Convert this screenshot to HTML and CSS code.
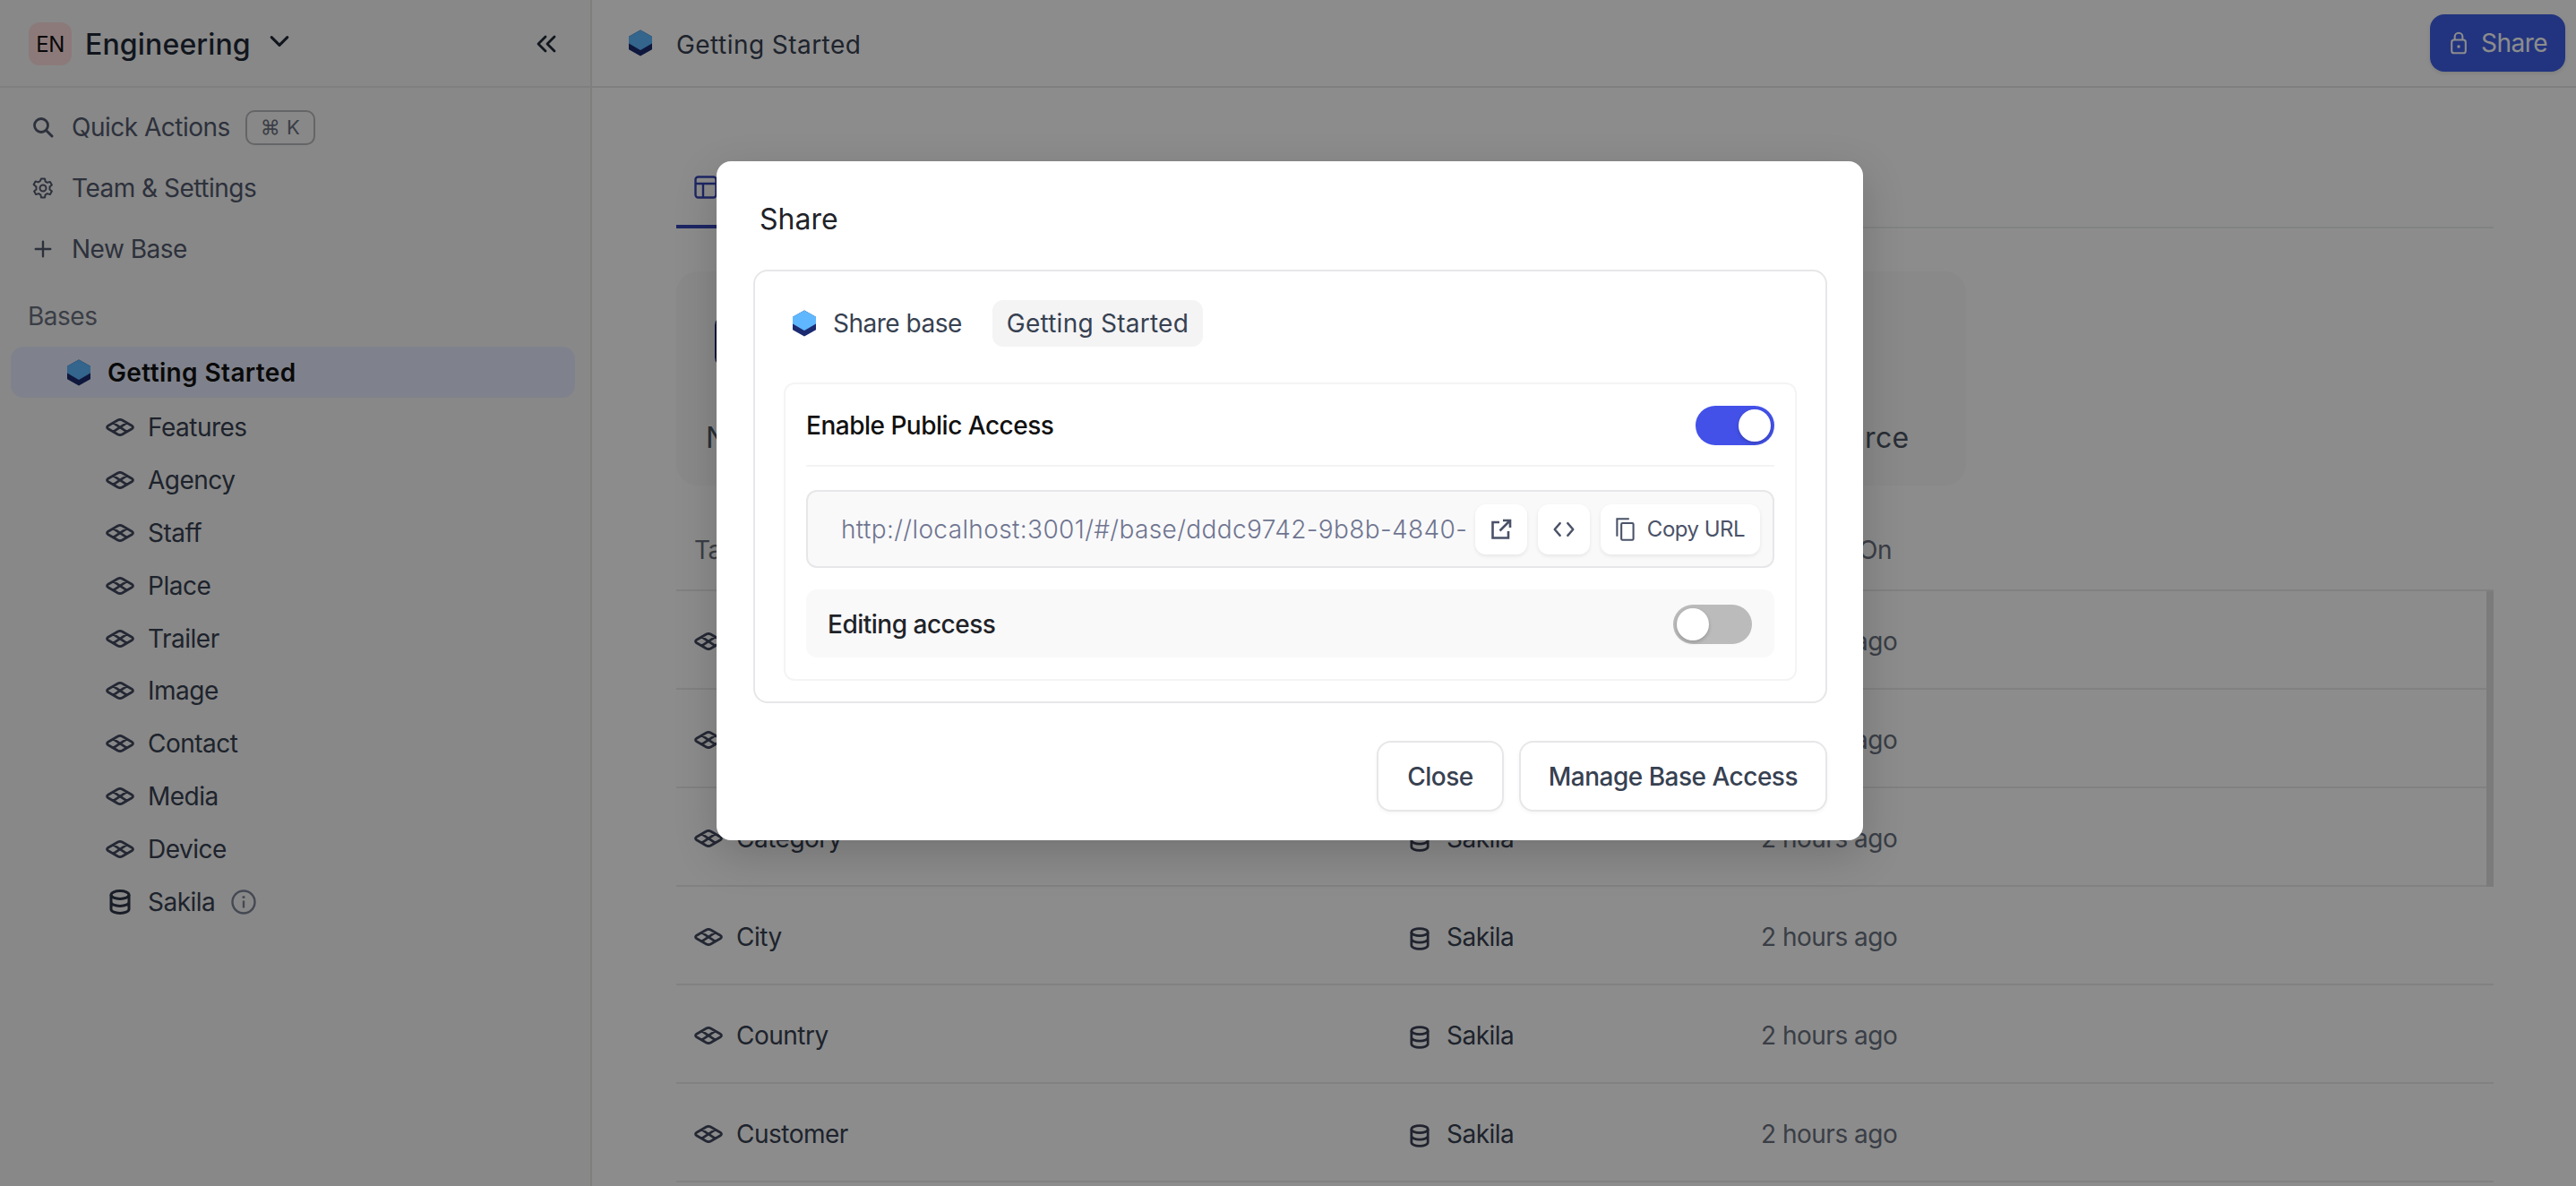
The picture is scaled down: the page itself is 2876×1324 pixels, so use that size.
FILE: index.html
```html
<!DOCTYPE html>
<html lang="en">
<head>
    <meta charset="UTF-8">
    <title>Getting Started - Share</title>
    <link rel="stylesheet" href="styles.css">
</head>
<body>
    <svg class="defs" width="0" height="0">
        <symbol id="i-table" viewBox="0 0 32 20">
            <path d="M13.6 2 2.8 8.200q-2.600 1.800 0 3.600l10.800 6.200q2.400 1.200 4.800 0l10.800-6.200q2.600-1.800 0-3.600L18.400 2q-2.400-1.200-4.800 0ZM8.600 5.200 23.400 14.800M23.400 5.200 8.600 14.800" fill="none" stroke="currentColor" stroke-width="2.800" stroke-linejoin="round"/>
        </symbol>
        <symbol id="i-db" viewBox="0 0 24 28">
            <g fill="none" stroke="currentColor" stroke-width="3">
                <ellipse cx="12" cy="6" rx="10" ry="4.400"/>
                <path d="M2 6v16c0 2.600 4.500 4.400 10 4.400s10-1.800 10-4.400V6M2 14c0 2.600 4.500 4.400 10 4.400s10-1.800 10-4.400"/>
            </g>
        </symbol>
        <symbol id="i-hex" viewBox="0 0 26 30">
            <path d="M13 1.500 25 8.300V21.700L13 28.500 1 21.700V8.300Z" fill="#1c2b70" stroke="#1c2b70" stroke-width="2" stroke-linejoin="round"/>
            <path d="M13 1.500 25 8.300V15L13 22 1 15V8.300Z" fill="#5fb8ff" stroke="#5fb8ff" stroke-width="2" stroke-linejoin="round"/>
        </symbol>
    </svg>

    <div class="app">
        <aside class="sidebar">
            <div class="workspace">
                <span class="ws-badge">EN</span>
                <span class="ws-name">Engineering</span>
                <svg class="ws-chevron" viewBox="0 0 20 12"><path d="M2 2l8 8 8-8" fill="none" stroke="currentColor" stroke-width="2.800" stroke-linecap="round" stroke-linejoin="round"/></svg>
                <svg class="ws-collapse" viewBox="0 0 22 20"><path d="M10 2 2 10l8 8M20 2l-8 8 8 8" fill="none" stroke="currentColor" stroke-width="2.800" stroke-linecap="round" stroke-linejoin="round"/></svg>
            </div>

            <nav class="menu">
                <div class="menu-item">
                    <svg class="menu-icon" viewBox="0 0 24 24"><circle cx="10" cy="10" r="7.500" fill="none" stroke="currentColor" stroke-width="2.800"/><path d="M15.500 15.500 22 22" stroke="currentColor" stroke-width="3" stroke-linecap="round"/></svg>
                    <span>Quick Actions</span>
                    <span class="kbd">⌘ K</span>
                </div>
                <div class="menu-item">
                    <svg class="menu-icon" viewBox="0 0 24 24"><g fill="none" stroke="currentColor" stroke-width="2" stroke-linejoin="round"><circle cx="12" cy="12" r="3.500"/><path d="M10 1.500h4l.7 3.200 2.100 1.200 3.100-1 2 3.500-2.400 2.200v2.800l2.400 2.200-2 3.500-3.100-1-2.100 1.200-.7 3.200h-4l-.7-3.200-2.100-1.200-3.100 1-2-3.500 2.400-2.200v-2.800L1.600 7.900l2-3.500 3.100 1 2.100-1.200Z"/></g></svg>
                    <span>Team &amp; Settings</span>
                </div>
                <div class="menu-item">
                    <svg class="menu-icon plus" viewBox="0 0 24 24"><path d="M12 3v18M3 12h18" stroke="currentColor" stroke-width="2.600" stroke-linecap="round"/></svg>
                    <span>New Base</span>
                </div>
            </nav>

            <div class="bases-title">Bases</div>
            <div class="base-active">
                <svg class="hex"><use href="#i-hex"/></svg>
                <span>Getting Started</span>
            </div>

            <ul class="tree">
                <li><svg class="tbl-icon"><use href="#i-table"/></svg>Features</li>
                <li><svg class="tbl-icon"><use href="#i-table"/></svg>Agency</li>
                <li><svg class="tbl-icon"><use href="#i-table"/></svg>Staff</li>
                <li><svg class="tbl-icon"><use href="#i-table"/></svg>Place</li>
                <li><svg class="tbl-icon"><use href="#i-table"/></svg>Trailer</li>
                <li><svg class="tbl-icon"><use href="#i-table"/></svg>Image</li>
                <li><svg class="tbl-icon"><use href="#i-table"/></svg>Contact</li>
                <li><svg class="tbl-icon"><use href="#i-table"/></svg>Media</li>
                <li><svg class="tbl-icon"><use href="#i-table"/></svg>Device</li>
                <li>
                    <svg class="tree-db"><use href="#i-db"/></svg>Sakila
                    <svg class="info" viewBox="0 0 28 28"><circle cx="14" cy="14" r="12.500" fill="none" stroke="currentColor" stroke-width="2.400"/><path d="M14 12.500v8" stroke="currentColor" stroke-width="2.400"/><circle cx="14" cy="8.500" r="1.600" fill="currentColor"/></svg>
                </li>
            </ul>
        </aside>

        <main class="main">
            <header class="topbar">
                <svg class="hex"><use href="#i-hex"/></svg>
                <span class="topbar-title">Getting Started</span>
                <button class="share-btn">
                    <svg viewBox="0 0 22 30"><g fill="none" stroke="currentColor" stroke-width="2.400"><rect x="2" y="11" width="18" height="17" rx="3"/><path d="M6 11V7a5 5 0 0 1 10 0v4"/></g><circle cx="11" cy="19.500" r="2" fill="currentColor"/></svg>
                    Share
                </button>
            </header>

            <section class="content">
                <div class="tabs">
                    <div class="tab">
                        <svg viewBox="0 0 26 26"><g fill="none" stroke="currentColor" stroke-width="2.400"><rect x="1.500" y="1.500" width="23" height="23" rx="3"/><path d="M1.500 9h23M10 9v15.500"/></g></svg>
                        Tables
                    </div>
                </div>

                <div class="cards">
                    <div class="card">
                        <svg class="card-icon" viewBox="0 0 56 56"><rect x="2" y="2" width="52" height="52" rx="8" fill="none" stroke="#1c2b70" stroke-width="4"/></svg>
                        <span>New Table</span>
                    </div>
                    <div class="card"><span>Import Data</span></div>
                    <div class="card"><span>Connect to Data Source</span></div>
                </div>

                <div class="table">
                    <div class="thead">
                        <span>Table Name</span>
                        <span>Source</span>
                        <span>Created On</span>
                    </div>
                    <div class="tbody">
                        <div class="row">
                            <span class="cell-name"><svg class="tbl-icon"><use href="#i-table"/></svg>Actor</span>
                            <span class="cell-src"><svg class="src-icon"><use href="#i-db"/></svg>Sakila</span>
                            <span class="cell-time">2 hours ago</span>
                        </div>
                        <div class="row">
                            <span class="cell-name"><svg class="tbl-icon"><use href="#i-table"/></svg>Address</span>
                            <span class="cell-src"><svg class="src-icon"><use href="#i-db"/></svg>Sakila</span>
                            <span class="cell-time">2 hours ago</span>
                        </div>
                        <div class="row">
                            <span class="cell-name"><svg class="tbl-icon"><use href="#i-table"/></svg>Category</span>
                            <span class="cell-src"><svg class="src-icon"><use href="#i-db"/></svg>Sakila</span>
                            <span class="cell-time">2 hours ago</span>
                        </div>
                        <div class="row">
                            <span class="cell-name"><svg class="tbl-icon"><use href="#i-table"/></svg>City</span>
                            <span class="cell-src"><svg class="src-icon"><use href="#i-db"/></svg>Sakila</span>
                            <span class="cell-time">2 hours ago</span>
                        </div>
                        <div class="row">
                            <span class="cell-name"><svg class="tbl-icon"><use href="#i-table"/></svg>Country</span>
                            <span class="cell-src"><svg class="src-icon"><use href="#i-db"/></svg>Sakila</span>
                            <span class="cell-time">2 hours ago</span>
                        </div>
                        <div class="row">
                            <span class="cell-name"><svg class="tbl-icon"><use href="#i-table"/></svg>Customer</span>
                            <span class="cell-src"><svg class="src-icon"><use href="#i-db"/></svg>Sakila</span>
                            <span class="cell-time">2 hours ago</span>
                        </div>
                        <div class="scrollbar"></div>
                    </div>
                </div>
            </section>
        </main>
    </div>

    <div class="overlay">
        <div class="modal">
            <h2 class="modal-title">Share</h2>
            <div class="share-card">
                <div class="share-head">
                    <svg class="hex"><use href="#i-hex"/></svg>
                    <span class="share-label">Share base</span>
                    <span class="chip">Getting Started</span>
                </div>
                <div class="panel">
                    <div class="public-row">
                        <span>Enable Public Access</span>
                        <span class="toggle on"></span>
                    </div>
                    <div class="url-box">
                        <span class="url-text">http://localhost:3001/#/base/dddc9742-9b8b-4840-</span>
                        <button class="url-btn">
                            <svg viewBox="0 0 24 24"><path d="M10 4H2.500v17.500H20V14M14 2h8v8M22 2 10.500 13.500" fill="none" stroke="currentColor" stroke-width="2.600"/></svg>
                        </button>
                        <button class="url-btn">
                            <svg viewBox="0 0 28 20"><path d="M9 2 2 10l7 8M19 2l7 8-7 8" fill="none" stroke="currentColor" stroke-width="2.800" stroke-linecap="round" stroke-linejoin="round"/></svg>
                        </button>
                        <button class="url-btn copy">
                            <svg viewBox="0 0 24 30"><g fill="none" stroke="currentColor" stroke-width="2.400"><path d="M1.500 24V1.500H17"/><rect x="7" y="7" width="15.500" height="21.500" rx="1.500"/></g></svg>
                            Copy URL
                        </button>
                    </div>
                    <div class="edit-row">
                        <span>Editing access</span>
                        <span class="toggle"></span>
                    </div>
                </div>
            </div>
            <div class="modal-actions">
                <button class="btn close">Close</button>
                <button class="btn manage">Manage Base Access</button>
            </div>
        </div>
    </div>
</body>
</html>
```

FILE: styles.css
```css
* {
    box-sizing: border-box;
}

body {
    margin: 0;
    height: 100vh;
    overflow: hidden;
    font-family: Inter, "Liberation Sans", sans-serif;
    font-size: 28px;
    letter-spacing: -0.5px;
    color: #374151;
    background-color: #fff;
}

button {
    font: inherit;
    letter-spacing: inherit;
    cursor: pointer;
}

.defs {
    display: block;
    height: 0;
}

.app {
    display: flex;
    height: 1324px;
}

/* sidebar */
.sidebar {
    width: 661px;
    flex-shrink: 0;
    background-color: #f8f8f8;
    border-right: 2px solid #e7e7e9;
}

.workspace {
    display: flex;
    align-items: center;
    height: 98px;
    padding: 2px 38px 0 32px;
    border-bottom: 2px solid #e7e7e9;
    color: #1f2937;
}

.ws-badge {
    display: flex;
    align-items: center;
    justify-content: center;
    width: 48px;
    height: 48px;
    border-radius: 12px;
    background-color: #ffdfdf;
    font-size: 24px;
    color: #111;
}

.ws-name {
    margin-left: 15px;
    font-size: 32px;
    font-weight: 500;
    letter-spacing: 0.15px;
}

.ws-chevron {
    width: 22px;
    height: 14px;
    margin: 0 0 6px 21px;
}

.ws-collapse {
    width: 22px;
    height: 20px;
    margin-left: auto;
}

.menu {
    padding-top: 10px;
}

.menu-item {
    display: flex;
    align-items: center;
    height: 68px;
    padding-left: 36px;
    color: #525a6e;
}

.menu-icon {
    width: 24px;
    height: 24px;
    margin-right: 20px;
    flex-shrink: 0;
}

.menu-icon.plus {
    width: 22px;
    margin: 0 21px 0 1px;
}

.kbd {
    margin-left: 17px;
    padding: 0 15px;
    height: 39px;
    line-height: 34px;
    border: 2px solid #b6b8bc;
    border-radius: 10px;
    font-size: 22px;
    letter-spacing: 0.5px;
    color: #6b7280;
}

.bases-title {
    height: 40px;
    line-height: 40px;
    margin: 21px 0 14px 31px;
    color: #6b7280;
}

.base-active {
    display: flex;
    align-items: center;
    height: 57px;
    margin: 0 17px 0 12px;
    padding-left: 63px;
    border-radius: 14px;
    background-color: #e7edff;
    font-weight: 600;
    letter-spacing: 0.37px;
    color: #111;
}

.hex {
    width: 26px;
    height: 30px;
    flex-shrink: 0;
}

.base-active .hex {
    margin-right: 19px;
}

.tree {
    list-style: none;
    margin: 4px 0 0;
    padding: 0 0 0 118px;
}

.tree li {
    display: flex;
    align-items: center;
    height: 58.8px;
    color: #374151;
}

.tbl-icon {
    width: 32px;
    height: 20px;
    margin-right: 15px;
    flex-shrink: 0;
    color: #434a60;
}

.tree-db {
    width: 24px;
    height: 28px;
    margin: 0 19px 0 4px;
    color: #2f3648;
}

.info {
    width: 28px;
    height: 28px;
    margin-left: 18px;
    color: #7d8597;
}

/* main area */
.main {
    flex: 1;
    min-width: 0;
}

.topbar {
    display: flex;
    align-items: center;
    height: 98px;
    padding: 0 12px 0 41px;
    border-bottom: 2px solid #e7e7e9;
}

.topbar-title {
    margin: 3px 0 0 27px;
    letter-spacing: 0.45px;
}

.share-btn {
    display: flex;
    align-items: center;
    gap: 15px;
    width: 151px;
    height: 64px;
    margin-left: auto;
    padding: 0 0 0 22px;
    border: none;
    border-radius: 16px;
    background-color: #3e5fe8;
    color: #fff;
    box-shadow: 0 2px 4px rgba(0, 0, 0, 0.1);
}

.share-btn svg {
    width: 20px;
    height: 26px;
}

.content {
    padding: 0 92px 0 94px;
}

.tabs {
    display: flex;
    align-items: flex-end;
    height: 157px;
    border-bottom: 2px solid #eceded;
}

.tab {
    display: flex;
    align-items: center;
    gap: 16px;
    height: 58px;
    padding: 0 20px 31px;
    margin-bottom: -2px;
    border-bottom: 4px solid #3646b5;
    color: #3646b5;
}

.tab svg {
    width: 26px;
    height: 26px;
}

.cards {
    display: flex;
    gap: 24px;
    width: 1440px;
    margin-top: 48px;
}

.card {
    flex: 1;
    display: flex;
    flex-direction: column;
    justify-content: flex-end;
    height: 239px;
    padding: 0 33px 34px;
    border-radius: 24px;
    background-color: #f9f9f9;
    font-size: 32px;
    letter-spacing: 0.3px;
    color: #4b5563;
}

.card-icon {
    width: 56px;
    height: 56px;
    margin: 0 0 60px 10px;
}

.thead,
.row {
    display: grid;
    grid-template-columns: 799px 392px 1fr;
    align-items: center;
}

.thead {
    height: 118px;
    padding-top: 28px;
    border-bottom: 2px solid #ececec;
    color: #6b7280;
}

.thead span,
.row > span {
    padding-left: 20px;
}

.tbody {
    position: relative;
}

.row {
    height: 110px;
    padding-top: 3px;
    border-bottom: 2px solid #ececec;
}

.cell-name,
.cell-src {
    display: flex;
    align-items: center;
}

.src-icon {
    width: 22px;
    height: 26px;
    margin: 4px 19px 0 0;
    color: #3c4356;
}

.cell-time {
    color: #6b7280;
}

.scrollbar {
    position: absolute;
    top: 0;
    right: 0;
    width: 8px;
    height: 330px;
    background-color: #e0e0e0;
}

/* share dialog */
.overlay {
    position: absolute;
    inset: 0;
    padding: 180px 0 0 800px;
    background-color: rgba(0, 0, 0, 0.45);
}

.modal {
    width: 1280px;
    height: 758px;
    padding: 0 40px 0 41px;
    border-radius: 16px;
    background-color: #fff;
    box-shadow: 0 16px 48px rgba(0, 0, 0, 0.18);
}

.modal-title {
    margin: 0;
    height: 121px;
    padding: 41px 0 0 7px;
    font-size: 32px;
    line-height: 48px;
    font-weight: 400;
    letter-spacing: 0;
    color: #1f2328;
}

.share-card {
    height: 484px;
    padding: 0 32px;
    border: 2px solid #e7e7e9;
    border-radius: 16px;
}

.share-head {
    display: flex;
    align-items: center;
    height: 124px;
    padding: 0 0 8px 10px;
    color: #374151;
}

.share-label {
    margin-left: 19px;
}

.chip {
    display: flex;
    align-items: center;
    height: 52px;
    margin-left: 34px;
    padding: 0 16px;
    border-radius: 12px;
    background-color: #f4f4f5;
    letter-spacing: 0.25px;
}

.panel {
    height: 333px;
    padding: 0 23px;
    border: 2px solid #f4f4f5;
    border-radius: 12px;
}

.public-row {
    display: flex;
    align-items: center;
    justify-content: space-between;
    height: 92px;
    padding-top: 2px;
    border-bottom: 2px solid #f4f4f5;
    font-weight: 500;
    color: #111;
}

.toggle {
    position: relative;
    width: 88px;
    height: 44px;
    border-radius: 22px;
    background-color: #bbb;
}

.toggle::after {
    content: "";
    position: absolute;
    top: 4px;
    left: 4px;
    width: 36px;
    height: 36px;
    border-radius: 50%;
    background-color: #fff;
    box-shadow: 0 2px 4px rgba(0, 0, 0, 0.2);
}

.toggle.on {
    background-color: #4351e8;
}

.toggle.on::after {
    left: 48px;
}

.url-box {
    display: flex;
    align-items: center;
    gap: 12px;
    height: 87px;
    margin-top: 26px;
    padding: 0 14px 0 37px;
    border: 2px solid #e7e7e9;
    border-radius: 12px;
    background-color: #f9f9fa;
}

.url-text {
    flex: 1;
    min-width: 0;
    white-space: nowrap;
    font-weight: 300;
    letter-spacing: 0.38px;
    color: #6f7590;
}

.url-btn {
    display: flex;
    align-items: center;
    justify-content: center;
    gap: 14px;
    width: 58px;
    height: 56px;
    flex-shrink: 0;
    border: none;
    border-radius: 12px;
    background-color: #fff;
    color: #4a5268;
    box-shadow: 0 2px 4px rgba(0, 0, 0, 0.08);
}

.url-btn svg {
    width: 24px;
    height: 24px;
}

.url-btn.copy {
    width: 178px;
    font-size: 24px;
}

.url-btn.copy svg {
    width: 21px;
    height: 26px;
}

.edit-row {
    display: flex;
    align-items: center;
    justify-content: space-between;
    height: 76px;
    margin-top: 24px;
    padding: 2px 25px 0 24px;
    border-radius: 12px;
    background-color: #f9f9fa;
    font-weight: 500;
    color: #1f2328;
}

.modal-actions {
    display: flex;
    justify-content: flex-end;
    gap: 17px;
    margin-top: 42px;
}

.btn {
    height: 79px;
    padding: 0 32px;
    border: 2px solid #e7e7e9;
    border-radius: 16px;
    background-color: #fff;
    font-weight: 500;
    color: #374151;
    box-shadow: 0 2px 4px rgba(0, 0, 0, 0.04);
}

.btn.manage {
    padding: 0 31px;
}
```
